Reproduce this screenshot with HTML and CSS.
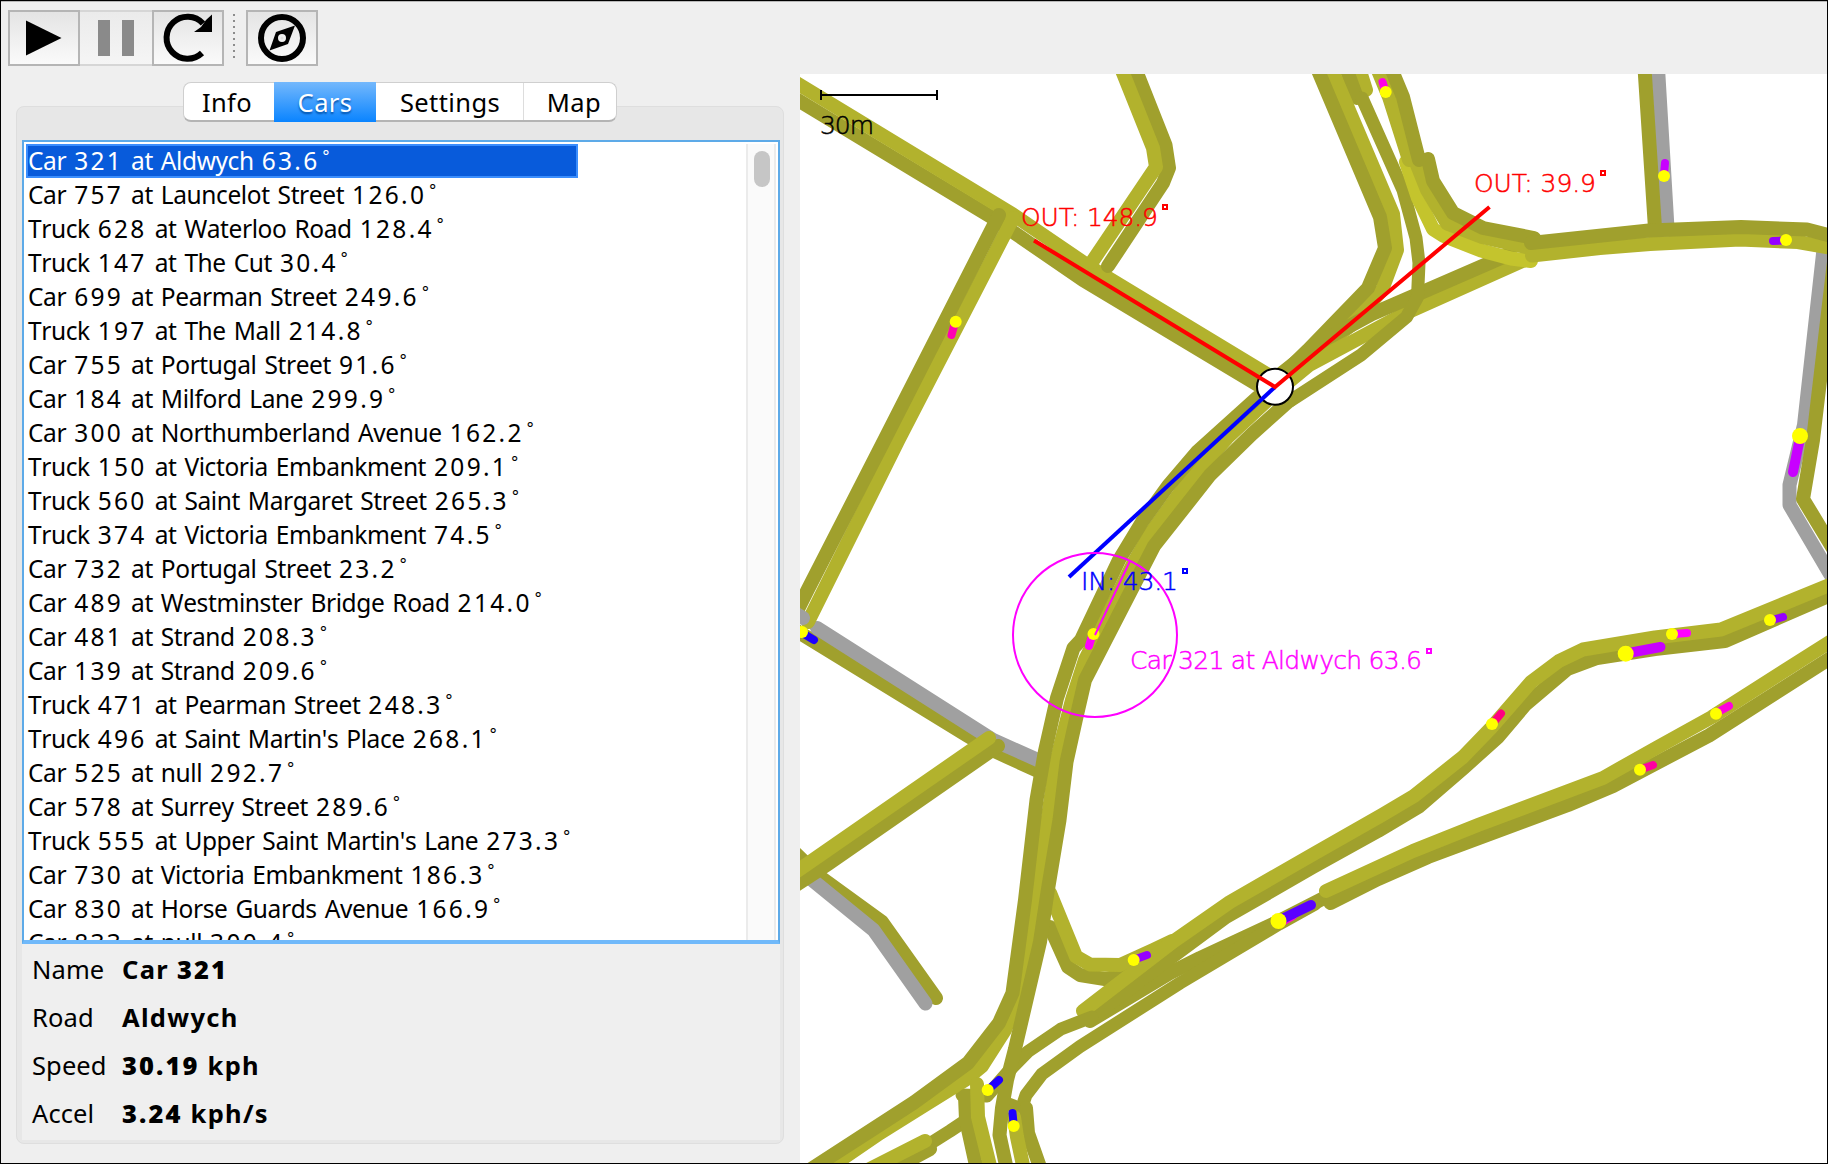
FILE: index.html
```html
<!DOCTYPE html>
<html lang="en">
<head>
<meta charset="utf-8">
<title>Traffic Simulator</title>
<link rel="stylesheet" href="styles.css">
</head>
<body>
<div class="window">
  <header class="toolbar">
    <button class="tool"><svg viewBox="0 0 72 56"><path d="M18 10.500L53.500 28L18 45.500Z"/></svg></button>
    <button class="tool disabled"><svg viewBox="0 0 72 56"><path d="M18 10H30V46H18ZM42 10H54V46H42Z"/></svg></button>
    <button class="tool"><svg viewBox="0 0 72 56"><path d="M50 43A21 21 0 1 1 51 13.500" class="line"/><path d="M60 4.500V22H42L49 17L54 10Z"/></svg></button>
    <span class="divider"></span>
    <button class="tool"><svg viewBox="0 0 72 56"><circle cx="36" cy="28" r="21" class="line"/><path fill-rule="evenodd" d="M49 15.500L42 34L23.500 40.500L30 22ZM36 24A4 4 0 1 0 36 32A4 4 0 1 0 36 24Z"/><circle cx="36" cy="28" r="1.500" class="pin"/></svg></button>
  </header>
  <main class="content">
    <section class="side">
      <nav class="tabs">
        <span class="tab info">Info</span><span class="tab cars">Cars</span><span class="tab settings">Settings</span><span class="tab maptab">Map</span>
      </nav>
      <div class="group">
        <div class="listbox">
          <ul class="list">
            <li class="selected">Car <b>321</b> at Aldwych <b>63.6</b><i>°</i></li>
            <li>Car <b>757</b> at Launcelot Street <b>126.0</b><i>°</i></li>
            <li>Truck <b>628</b> at Waterloo Road <b>128.4</b><i>°</i></li>
            <li>Truck <b>147</b> at The Cut <b>30.4</b><i>°</i></li>
            <li>Car <b>699</b> at Pearman Street <b>249.6</b><i>°</i></li>
            <li>Truck <b>197</b> at The Mall <b>214.8</b><i>°</i></li>
            <li>Car <b>755</b> at Portugal Street <b>91.6</b><i>°</i></li>
            <li>Car <b>184</b> at Milford Lane <b>299.9</b><i>°</i></li>
            <li>Car <b>300</b> at Northumberland Avenue <b>162.2</b><i>°</i></li>
            <li>Truck <b>150</b> at Victoria Embankment <b>209.1</b><i>°</i></li>
            <li>Truck <b>560</b> at Saint Margaret Street <b>265.3</b><i>°</i></li>
            <li>Truck <b>374</b> at Victoria Embankment <b>74.5</b><i>°</i></li>
            <li>Car <b>732</b> at Portugal Street <b>23.2</b><i>°</i></li>
            <li>Car <b>489</b> at Westminster Bridge Road <b>214.0</b><i>°</i></li>
            <li>Car <b>481</b> at Strand <b>208.3</b><i>°</i></li>
            <li>Car <b>139</b> at Strand <b>209.6</b><i>°</i></li>
            <li>Truck <b>471</b> at Pearman Street <b>248.3</b><i>°</i></li>
            <li>Truck <b>496</b> at Saint Martin's Place <b>268.1</b><i>°</i></li>
            <li>Car <b>525</b> at null <b>292.7</b><i>°</i></li>
            <li>Car <b>578</b> at Surrey Street <b>289.6</b><i>°</i></li>
            <li>Truck <b>555</b> at Upper Saint Martin's Lane <b>273.3</b><i>°</i></li>
            <li>Car <b>730</b> at Victoria Embankment <b>186.3</b><i>°</i></li>
            <li>Car <b>830</b> at Horse Guards Avenue <b>166.9</b><i>°</i></li>
            <li>Car <b>833</b> at null <b>300.4</b><i>°</i></li>
          </ul>
          <div class="scrollbar"><div class="thumb"></div></div>
        </div>
        <dl class="details">
          <dt>Name</dt><dd>Car <b>321</b></dd>
          <dt>Road</dt><dd>Aldwych</dd>
          <dt>Speed</dt><dd><b>30.19</b> kph</dd>
          <dt>Accel</dt><dd><b>3.24</b> kph/s</dd>
        </dl>
      </div>
    </section>
    <svg class="map" viewBox="800 74 1027 1089">
      <!-- lanes -->
      <g class="lanes">
        <path class="d" d="M795 630L968 736L992 750L1040 772"/>
        <path class="g" d="M817 628L993 740L1040 761"/>
        <path class="d" d="M790 848L820 877L882 922L936 998"/>
        <path class="g" d="M811 879L873.500 930L925.500 1003.500"/>
        <path class="d" d="M790 95.300L993 218L1008 228.500L1083 280L1268 391"/>
        <path class="l" d="M790 79L1013 214.500L1090 267L1275 379"/>
        <path class="d" d="M1135 68L1165.500 145L1169 168L1163 183L1108 266"/>
        <path class="l" d="M1121 68L1153 148L1156 167L1092 262"/>
        <path class="l" d="M1013 218L898.400 440L808 622"/>
        <path class="d" d="M999 215L884.400 440L807.600 590L795 615"/>
        <path class="g" d="M790 610L803 618"/>
        <path class="d" d="M998 746L828 864L813 874L790 889"/>
        <path class="l" d="M989 738L808 863.500L790 876"/>

        <path class="l" d="M1359 68L1366 90"/>
        <path class="d" d="M1346 68L1357 98"/>
        <path class="l" d="M1331 68L1393 214L1397 250L1382 290L1350 326L1300 365"/>
        <path class="d" d="M1317 68L1380 217L1385 248L1368 288L1308 350L1275 382"/>
        <path class="l" d="M1527 259L1408 312L1309 365L1286 384"/>
        <path class="d" d="M1510 254L1425 291L1372 314L1324 340L1282 373"/>
        <path class="d thin" d="M1362 98L1403 190L1416 238L1419 263L1417.500 297L1406.500 317L1361 355L1290 401"/>
        <path class="b" d="M1406 162L1418 198L1433 229L1444 236L1481 250.500L1511 258.500L1531 261"/>
        <path class="l" d="M1417 165L1427 190L1447 223.500L1482 237L1530 248"/>
        <path class="d" d="M1428 159L1433 181L1453 213L1483 228L1534 238"/>
        <path class="l" d="M1377 68L1389 97L1409 160"/>
        <path class="d" d="M1391 68L1403 97L1419 160"/>
        <path class="g" d="M1658 68L1667.500 228"/>
        <path class="d" d="M1644.500 68L1655 228"/>
        <path class="g" d="M1824 245L1804 425L1789.500 485V505L1830 574"/>
        <path class="d" d="M1836 245L1813 440L1803 499L1832 547"/>
        <path class="l" d="M1532 255.500L1600 248L1650 244L1740 239.500L1798 242L1832 248"/>
        <path class="d" d="M1531 243L1649 230.500L1741 227L1807 229.500L1832 236"/>

        <path class="d" d="M1050 927L1068 967L1080 975L1105 979L1133 973"/>
        <path class="l" d="M1050 893L1076 956.500L1090 964.500L1120 965L1153 950L1172 941"/>
        <path class="d" d="M1326 897L1273 924L1200 958L1170 973L1090 1021"/>
        <path class="d" d="M1832 594.500L1725 641L1655 649L1597 658L1567.500 669L1525 705L1498 737L1463.500 768L1419 806.500L1378 831L1313 867L1226 917L1172 957L1090 1018"/>
        <path class="l" d="M1832 584L1721 629.500L1655 637.500L1583 649.500L1559 661L1531 682L1491 728L1463 757L1414 796L1382 815L1317 852L1230 902L1174 941L1083 1011"/>
        <path class="d" d="M1832 657L1709 735.500L1613 786L1568 805L1428 857L1378 879L1330.500 903"/>
        <path class="l" d="M1832 640.500L1712 717L1657 747.500L1603 778L1478 825L1413 851L1326 891"/>

        <path class="d thin" d="M1315 904L1279 924L1180 983L1080 1046.500L1042 1074L1026 1095L1022 1107"/>
        <path class="d thin" d="M1092 1017L1061 1029L1028 1051.500L1007 1073L987 1096L962 1095"/>
        <path class="d" d="M1026 1108L1028 1133L1041 1170"/>
        <path class="l" d="M1014 1117L1017 1137L1024 1170"/>
        <path class="d thin" d="M1006 1103L1014 1106"/>
        <path class="d thin" d="M968 1119L950 1131L931 1143"/>
        <path class="d" d="M930 1149L895 1168"/>
        <path class="l" d="M925 1141L860 1174"/>
        <path class="l" d="M1275 393L1227 438L1188 482L1150 534L1133 564L1085 660L1072 700L1056 762L1047.500 820L1036 900L1024 970L1016 1002L1005 1030L982 1066L965 1080L920 1108L880 1133L820 1174"/>
        <path class="d" d="M1290 400L1252 434L1210 475L1154 546L1085 680L1076 719L1066.500 762L1059.500 820L1048 889L1040 942L1015 1049L1007 1080L1002 1108L999.500 1135L1007 1170"/>
        <path class="d" d="M1258 397L1197 452L1168 486L1142 522L1119 560L1081 640L1073.500 648L1057 698L1045 751L1036.500 800L1025 900L1012.500 993L999 1023L968 1063L914 1102.500L870 1131L805 1173"/>
        <path class="d" d="M965 1096L966 1120L977 1170"/>
        <path class="l" d="M977 1084L978 1117L991 1170"/>
      </g>
      <!-- vehicles -->
      <g class="body">
        <path stroke="#ff00b4" d="M954 326L951.500 335"/>
        <path stroke="#ff00e6" d="M1385 90L1382.500 82"/>
        <path stroke="#c800ff" d="M1664 174L1665 163"/>
        <path stroke="#9600ff" d="M1784 240.500L1773 241"/>
        <path stroke="#c800ff" class="truck" d="M1800 438L1793 472"/>
        <path stroke="#c800ff" class="truck" d="M1626 653.500L1660.500 647"/>
        <path stroke="#ff00ff" d="M1674 634L1687 633"/>
        <path stroke="#9600ff" d="M1772 620L1783 617"/>
        <path stroke="#ff0082" d="M1494 722L1501 713.500"/>
        <path stroke="#ff00dc" d="M1718 712L1729 706"/>
        <path stroke="#ff00a0" d="M1642 769L1653 765"/>
        <path stroke="#1e00ff" d="M804 634L814 640"/>
        <path stroke="#ff00ff" d="M1092 636L1089 646"/>
        <path stroke="#9600ff" d="M1136 959L1147 955"/>
        <path stroke="#ff00dc" d="M1282 922L1293 916"/>
        <path stroke="#5a00ff" class="truck" d="M1280 920L1311 905"/>
        <path stroke="#1e00ff" d="M990 1088L999 1080"/>
        <path stroke="#1e00ff" d="M1013.500 1123L1012.500 1113"/>
      </g>
      <g class="head">
        <circle cx="955.700" cy="321.700" r="6"/><circle cx="1385.700" cy="92" r="6"/><circle cx="1664" cy="176" r="6"/>
        <circle cx="1786" cy="240" r="6"/><circle cx="1800" cy="436" r="8"/><circle cx="1625.700" cy="653.700" r="8"/>
        <circle cx="1672" cy="634" r="6"/><circle cx="1770" cy="620" r="6"/><circle cx="1492" cy="724" r="6"/>
        <circle cx="1716" cy="713.700" r="6"/><circle cx="1640" cy="769.700" r="6"/><circle cx="802" cy="632" r="6"/>
        <circle cx="1093.500" cy="634" r="6"/><circle cx="1133.700" cy="960" r="6"/><circle cx="1278.500" cy="921" r="8"/>
        <circle cx="987.700" cy="1090" r="6"/><circle cx="1013.700" cy="1126" r="6"/>
      </g>
      <!-- junction and bearings -->
      <circle class="junction" cx="1275" cy="386.700" r="18"/>
      <path class="bearing in" d="M1069 577L1275 387"/>
      <path class="bearing out" d="M1034 240.500L1275 387L1489.500 207"/>
      <circle class="halo" cx="1095" cy="635" r="82"/>
      <path class="halo" d="M1095 635L1130 561"/>
      <path class="scale" d="M821 95H937M821 90V100M937 90V100"/>
      <g class="label">
        <text x="820" y="133.500" textLength="54">30m</text>
        <g fill="#f00" stroke="#f00"><text x="1021" y="225.500" textLength="137">OUT: 148.9</text><rect x="1163" y="205" width="4" height="4"/></g>
        <g fill="#f00" stroke="#f00"><text x="1474" y="191.500" textLength="122">OUT: 39.9</text><rect x="1601" y="171" width="4" height="4"/></g>
        <g fill="#00f" stroke="#00f"><text x="1081" y="589.500" textLength="97">IN: 43.1</text><rect x="1183" y="569" width="4" height="4"/></g>
        <g fill="#f0f" stroke="#f0f"><text x="1130" y="669" textLength="292">Car 321 at Aldwych 63.6</text><rect x="1427" y="649" width="4" height="4"/></g>
      </g>
    </svg>
  </main>
</div>
</body>
</html>
```
FILE: styles.css
```css
* { box-sizing: border-box; }
html { overflow: hidden; }
body { margin: 0; background: #efefef; font-family: "Noto Sans", "Open Sans", sans-serif; font-size: 25.500px; color: #000; }
.window { width: 1828px; height: 1164px; border: 1px solid #000; background: #efefef; overflow: hidden; display: flex; flex-direction: column; box-shadow: inset 0 1px #b8b8b8; }
.toolbar { height: 73px; flex: none; padding: 9px 0 0 7px; display: flex; align-items: flex-start; }
.tool { width: 72px; height: 56px; padding: 0; border: 2px solid #b5b5b5; border-radius: 0; background: linear-gradient(#e4e4e4, #fafafa); }
.tool svg { display: block; width: 72px; height: 56px; margin: -2px; }
.tool.disabled { border-color: #d6d6d6; border-left: 0; border-right: 0; background: linear-gradient(#ebebeb, #f5f5f5); fill: #8a8a8a; }
.tool.disabled svg { margin-left: 0; }
.line { fill: none; stroke: #000; stroke-width: 6; }
.pin { fill: #ddd; }
.divider { width: 2px; height: 46px; margin: 4px 11px 0 9px; background: repeating-linear-gradient(#8c8c8c 0 2px, transparent 2px 6px); }
.content { flex: 1; display: flex; min-height: 0; }
.side { width: 799px; flex: none; padding: 8px 16px 0 15px; display: flex; flex-direction: column; }
.tabs { height: 40px; width: 434px; margin-left: 167px; display: flex; flex: none; border-radius: 8px; background: #fff; border: 1px solid #cfcfcf; border-bottom: 2px solid #b4b4b4; position: relative; z-index: 1; line-height: 38px; letter-spacing: .4px; }
.tab { text-align: center; }
.info { width: 90px; padding-right: 4px; }
.cars { width: 102px; margin: -1px 0 -2px; line-height: 40px; color: #fff; background: linear-gradient(#74b8fc, #0a84ff); text-shadow: 0 2px 2px #0050a8; }
.settings { width: 148px; padding-left: 1px; border-right: 1px solid #ddd; }
.maptab { flex: 1; padding-left: 8px; }
.group { height: 1038px; margin-top: -16px; padding: 33px 3px 3px 5px; background: #e7e7e7; border: 1px solid #dedede; border-radius: 8px; display: flex; flex-direction: column; }
.listbox { height: 804px; flex: none; border: 2px solid #5daae8; border-bottom: 4px solid #70b9fa; background: #fff; display: flex; justify-content: space-between; padding: 2px 2px 0; overflow: hidden; }
.list { list-style: none; margin: 0; padding: 0; width: 552px; height: 796px; overflow: hidden; white-space: nowrap; font-size: 24.500px; letter-spacing: -.4px; word-spacing: 2px; font-kerning: none; }
.list li { height: 34px; line-height: 33px; padding-left: 2px; }
.list .selected { background: #085bdb; color: #fff; border: 2px solid #3b8efd; line-height: 29px; padding-left: 0; }
.list b { font-weight: 400; letter-spacing: 2.300px; }
.list i { font-style: normal; font-size: 16px; margin-left: 3px; position: relative; top: -8px; line-height: 0; }
.scrollbar { width: 30px; border: solid #ebebeb; border-width: 0 2px; background: #fafafa; padding: 7px 4px 0 6px; }
.thumb { width: 16px; height: 36px; border-radius: 8px; background: #c6c6c6; }
.details { flex: 1; margin: 0; padding: 2px 0 0 10px; background: #efefef; display: grid; grid-template-columns: 90px 1fr; grid-auto-rows: 48px; line-height: 47px; letter-spacing: .1px; }
.details dd { margin: 0; font-weight: 700; letter-spacing: 1.300px; }
.details b { letter-spacing: 2.100px; }
.map { width: 1027px; height: 1089px; flex: none; background: #fff; }
.lanes path { fill: none; stroke-width: 14; stroke-linecap: round; stroke-linejoin: round; }
.lanes .thin { stroke-width: 13; }
.lanes .d { stroke: #a0a02d; }
.lanes .l { stroke: #b2b22d; }
.lanes .b { stroke: #c4c42d; }
.lanes .g { stroke: #a0a0a0; }
.body path { fill: none; stroke-width: 8; stroke-linecap: round; }
.body .truck { stroke-width: 10; }
.head { fill: #ff0; }
.junction { fill: #fff; stroke: #000; stroke-width: 2; }
.bearing { fill: none; stroke-width: 4; }
.in { stroke: #00f; }
.out { stroke: #f00; }
.halo { fill: none; stroke: #f0f; stroke-width: 2; }
.scale { fill: none; stroke: #000; stroke-width: 2; }
.label { font-family: "DejaVu Sans Light", "DejaVu Sans", "Open Sans", sans-serif; font-weight: 200; font-size: 25px; stroke: #000; }
.label text { stroke-width: .5px; }
.label rect { fill: none; stroke-width: 2; }
```
